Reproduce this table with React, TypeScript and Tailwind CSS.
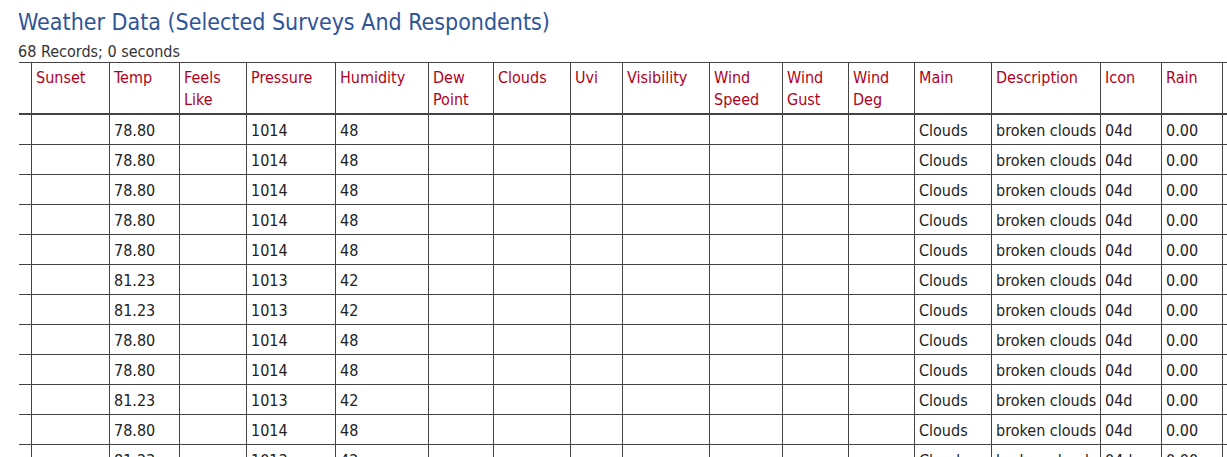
const rows = [
  { temp: "78.80", pressure: "1014", humidity: "48" },
  { temp: "78.80", pressure: "1014", humidity: "48" },
  { temp: "78.80", pressure: "1014", humidity: "48" },
  { temp: "78.80", pressure: "1014", humidity: "48" },
  { temp: "78.80", pressure: "1014", humidity: "48" },
  { temp: "81.23", pressure: "1013", humidity: "42" },
  { temp: "81.23", pressure: "1013", humidity: "42" },
  { temp: "78.80", pressure: "1014", humidity: "48" },
  { temp: "78.80", pressure: "1014", humidity: "48" },
  { temp: "81.23", pressure: "1013", humidity: "42" },
  { temp: "78.80", pressure: "1014", humidity: "48" },
  { temp: "81.23", pressure: "1013", humidity: "42" },
  { temp: "78.80", pressure: "1014", humidity: "48" },
];

const headers = [
  "",
  "Sunset",
  "Temp",
  "Feels Like",
  "Pressure",
  "Humidity",
  "Dew Point",
  "Clouds",
  "Uvi",
  "Visibility",
  "Wind Speed",
  "Wind Gust",
  "Wind Deg",
  "Main",
  "Description",
  "Icon",
  "Rain",
  "",
];

const gridCols =
  "grid grid-cols-[13px_78px_70px_67px_89px_93px_65px_77px_52px_87px_73px_66px_66px_77px_109px_61px_61px_80px]";

export default function App() {
  return (
    <div className="h-screen w-full overflow-hidden bg-white pl-[18px] pt-[6px] font-['DejaVu_Sans_Condensed','DejaVu_Sans',sans-serif] text-[16px]">
      <h1 className="whitespace-nowrap text-[23px] leading-[32px] text-[#2f5597]">
        Weather Data (Selected Surveys And Respondents)
      </h1>
      <p className="mt-[3px] whitespace-nowrap leading-[21px] text-[#333]">68 Records; 0 seconds</p>

      {/* table runs past the right edge, like the scrolled page */}
      <div className="ml-px w-max border-t border-[#444]" role="table">
        <div className={gridCols} role="row">
          {headers.map((h, i) => (
            <div
              key={i}
              role="columnheader"
              className="border-r border-b-2 border-[#444] px-1 pt-[4px] pb-[2px] leading-[22px] text-[#b0001c]"
            >
              {h}
            </div>
          ))}
        </div>
        {rows.map((r, i) => {
          const cells = [
            "",
            "",
            r.temp,
            "",
            r.pressure,
            r.humidity,
            "",
            "",
            "",
            "",
            "",
            "",
            "",
            "Clouds",
            "broken clouds",
            "04d",
            "0.00",
            "",
          ];
          return (
            <div key={i} className={gridCols} role="row">
              {cells.map((c, j) => (
                <div
                  key={j}
                  role="cell"
                  className="h-[30px] whitespace-nowrap border-r border-b border-[#444] px-1 pt-[5px] pb-[2px] leading-[22px] text-[#222]"
                >
                  {c}
                </div>
              ))}
            </div>
          );
        })}
      </div>
    </div>
  );
}
